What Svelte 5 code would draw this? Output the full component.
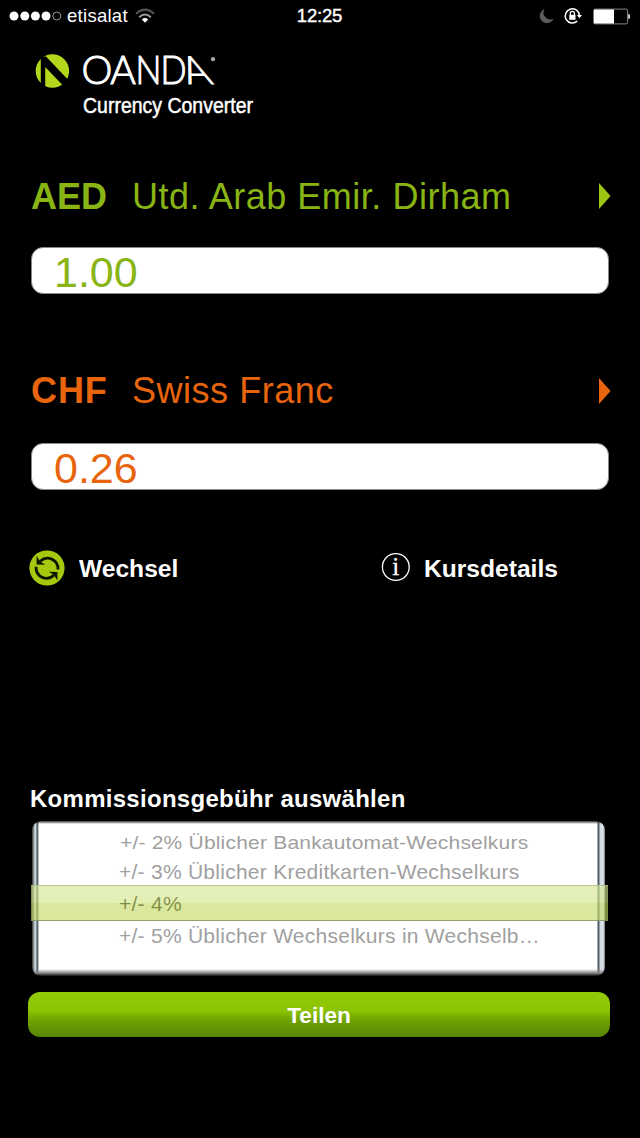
<script>
  const currencies = [
    { code: 'AED', name: 'Utd. Arab Emir. Dirham', value: '1.00', tone: 'green' },
    { code: 'CHF', name: 'Swiss Franc', value: '0.26', tone: 'orange' }
  ];
  const fees = [
    { text: '+/- 2% Üblicher Bankautomat-Wechselkurs', kind: 'far' },
    { text: '+/- 3% Üblicher Kreditkarten-Wechselkurs', kind: 'near' },
    { text: '+/- 4%', kind: 'selected' },
    { text: '+/- 5% Üblicher Wechselkurs in Wechselb…', kind: 'after' }
  ];
</script>

<div class="screen">
  <div class="status">
    <div class="carrier">
      <svg width="53" height="12" viewBox="0 0 53 12">
        {#each [5, 15.8, 26.4, 37] as cx}
          <circle {cx} cy="6" r="4.5" fill="#fff" />
        {/each}
        <circle cx="47.8" cy="6" r="4" fill="none" stroke="#999" stroke-width="1" />
      </svg>
      <span>etisalat</span>
      <svg class="wifi" width="20" height="16" viewBox="0 0 20 16" fill="none">
        <path d="M1 5.7Q10 -2.5 19 5.7" stroke="#555" stroke-width="2.2" />
        <path d="M4.2 9.2Q10 3.8 15.8 9.2" stroke="#999" stroke-width="2.1" />
        <path d="M6.8 11.5Q10 8.6 13.2 11.5L10 14.8Z" fill="#fff" />
      </svg>
    </div>
    <time>12:25</time>
    <div class="indicators">
      <svg width="15" height="16" viewBox="0 0 15 16">
        <path d="M5.4 1.2A7.2 7.2 0 1 0 14.6 10.8A7 7 0 0 1 5.4 1.2Z" fill="#5c5c5c" />
      </svg>
      <svg width="18" height="18" viewBox="0 0 18 18" fill="none">
        <path d="M15.4 8.2A7.1 7.1 0 1 0 13.2 14.1" stroke="#fff" stroke-width="1.5" />
        <path d="M12.8 8H18L15.4 11.2Z" fill="#fff" />
        <rect x="5.3" y="7.8" width="6.2" height="5" fill="#fff" />
        <path d="M6.4 8V6.2Q6.4 4.3 8.4 4.3T10.4 6.2V8" stroke="#fff" stroke-width="1.3" />
      </svg>
      <svg width="38" height="17" viewBox="0 0 38 17">
        <rect x="1.6" y="1.1" width="34" height="14.8" rx="1.5" fill="none" stroke="#888" />
        <path d="M2 1.5H22V15.5H2Z" fill="#fff" />
        <path d="M36.6 6.5H37.2Q38 8.5 37.2 10.5H36.6Z" fill="#fff" stroke="#fff" stroke-width=".6" />
      </svg>
    </div>
  </div>

  <header>
    <svg class="mark" width="35" height="34" viewBox="0 0 35 34">
      <circle cx="17.4" cy="17" r="16.7" fill="#b3d81b" />
      <path d="M5.8 2.5H11L33.8 26.5L28 31.5L10.2 13V34H5.8Z" fill="#000" />
    </svg>
    <div class="wordmark">
      <svg width="134" height="35" viewBox="0 0 134 35">
        <text x="-1.5 27.2" y="30.3">OA</text>
        <text transform="translate(52.6 30.3) scale(.88 1)" x="0 28.2">ND</text>
        <text transform="translate(105.4 30.3) skewX(23)">A</text>
        <circle cx="130" cy="5.2" r="2.1" fill="#aaa" />
      </svg>
      <svg class="product" width="174" height="28" viewBox="0 0 174 28">
        <text x="0" y="19.5" textLength="170" lengthAdjust="spacingAndGlyphs">Currency Converter</text>
      </svg>
    </div>
  </header>

  <main>
    {#each currencies as c}
      <section class="currency {c.tone}">
        <div class="title">
          <b>{c.code}</b>
          <span>{c.name}</span>
          <svg width="12" height="26" viewBox="0 0 12 26"><path d="M0 0L11.5 13L0 26Z" fill="currentColor" /></svg>
        </div>
        <div class="field">{c.value}</div>
      </section>
    {/each}
  </main>

  <nav>
    <div class="action swap">
      <svg width="36" height="36" viewBox="0 0 36 36" fill="none">
        <circle cx="18" cy="18" r="17.6" fill="#a5c90f" />
        <path d="M11.2 11.2C18 5 29.2 9 29 19.5" stroke="#101500" stroke-width="2.8" />
        <path d="M7.6 5.8L7.6 14.4L16.4 14.8L12.6 12.4L10 9.8Z" fill="#101500" />
        <path d="M24.8 25.2C18 31.6 6.8 27.4 7 16.8" stroke="#101500" stroke-width="2.8" />
        <path d="M28.4 30.6L28.4 22L19.6 21.8L23.4 24L26 26.8Z" fill="#101500" />
      </svg>
      <b>Wechsel</b>
    </div>
    <div class="action details">
      <svg width="30" height="30" viewBox="0 0 30 30" fill="none">
        <circle cx="14.8" cy="14" r="13.4" stroke="#fff" stroke-width="1.3" />
        <text x="14.8" y="22" text-anchor="middle">i</text>
      </svg>
      <b>Kursdetails</b>
    </div>
  </nav>

  <section class="commission">
    <h2>Kommissionsgebühr auswählen</h2>
    <div class="picker">
      <div class="wheel">
        {#each fees as fee}
          <div class="fee {fee.kind}"><span>{fee.text}</span></div>
        {/each}
      </div>
      <div class="band"></div>
    </div>
    <button>Teilen</button>
  </section>
</div>

<style>
  :global(body) { background: #000; }
  .screen {
    width: 640px; height: 1138px; overflow: hidden; background: #000; color: #fff;
    font-family: "Liberation Sans", Arial, sans-serif;
    display: flex; flex-direction: column;
  }
  svg { display: block; flex: none; overflow: visible; }
  .status {
    height: 32px; flex: none; padding: 0 10px 0 9px;
    display: grid; grid-template-columns: 1fr auto 1fr; align-items: center;
    font-size: 18.5px;
  }
  .carrier { display: flex; align-items: center; gap: 5px; }
  .carrier span { letter-spacing: .28px; }
  .wifi { margin-left: 2px; }
  time { font-size: 18.5px; letter-spacing: -.2px; -webkit-text-stroke: .4px #fff; }
  .indicators { display: flex; justify-content: flex-end; align-items: center; gap: 10px; }
  header { height: 137px; flex: none; padding: 22px 0 0 35px; display: flex; gap: 13px; box-sizing: border-box; }
  .wordmark text { font: 300 39px Lato, sans-serif; fill: #fff; stroke: #fff; stroke-width: 1px; }
  .wordmark .product text { font: 22.5px "Liberation Sans", sans-serif; stroke-width: .5px; }
  .product { margin-top: 4px; }
  main { height: 373px; flex: none; display: flex; flex-direction: column; }
  .currency { flex: none; padding: 0 31px; height: 194px; }
  .green { color: #88b414; }
  .orange { color: #e8650e; }
  .title { height: 54px; display: flex; align-items: center; font-size: 36px; margin-right: -2px; }
  .title b { width: 101px; padding-top: 1px; }
  .orange b { letter-spacing: .9px; }
  .title span { flex: 1; padding-top: 1px; letter-spacing: .52px; white-space: nowrap; }
  .green .title svg { color: #9bc713; }
  .orange .title svg { margin-top: 2px; }
  .field {
    margin-top: 24px; height: 47px; box-sizing: border-box; padding: 3px 0 0 22px;
    display: flex; align-items: center; background: #fff; border: 1px solid #888; border-radius: 12px;
    font-size: 43px; line-height: 1;
  }
  .orange .field { margin-top: 26px; padding-top: 4px; }
  nav { height: 52px; flex: none; padding-left: 29px; display: grid; grid-template-columns: 352px 1fr; }
  .action { display: flex; align-items: center; gap: 14px; font-size: 24.6px; }
  .action b { padding-top: 1px; }
  .details { gap: 13px; }
  .details text { font: 25px "Liberation Serif", serif; fill: #fff; stroke: #fff; stroke-width: .3px; }
  .commission { margin-top: 187px; padding: 0 28px; }
  h2 { margin: 0 0 3px 2px; font-size: 24px; line-height: 36px; height: 37px; letter-spacing: .28px; white-space: nowrap; }
  .picker { position: relative; height: 155px; }
  .wheel {
    margin: 0 7px 0 4px; height: 155px; box-sizing: border-box; padding: 9px 0 0 87px;
    border-radius: 9px;
    background:
      linear-gradient(#333, #fff0 3px, #fff0 148px, #888 152px, #111),
      linear-gradient(90deg, #333, #ced8dd 3px, #ced8dd 4px, #34424a 5px, #77858b 6px, #fff 7px, #fff 565px, #445158 566px, #5c6970 567px, #cbd8e3 568px, #dfe7ef 571px, #777);
  }
  .fee { display: flex; align-items: center; height: 32px; font-size: 21px; letter-spacing: .26px; color: #a0a0a0; white-space: nowrap; }
  .fee span { transform-origin: left center; }
  .far { height: 26px; padding-left: 1px; letter-spacing: .2px; }
  .far span { transform: scaleY(.9); }
  .near { height: 31px; }
  .selected { height: 33px; color: #000; }
  .after { height: 31px; }
  .band {
    position: absolute; left: 3px; right: 4px; top: 64px; height: 36px; box-sizing: border-box;
    border-top: 1px solid #b5c285; border-bottom: 1px solid #8c9764;
    background: linear-gradient(#d6e994b0, #d3e788b0 49%, #c6dc69b0 50%, #c9df67b0);
    opacity: .92;
  }
  button {
    display: block; width: 582px; height: 45px; margin: 16px 0 0; padding: 2px 0 0; border: 0; border-radius: 12px;
    color: #fff; font: bold 22.6px "Liberation Sans", Arial, sans-serif;
    background: linear-gradient(#94cc08, #8bc202 42%, #70a302 62%, #568504);
  }
</style>
